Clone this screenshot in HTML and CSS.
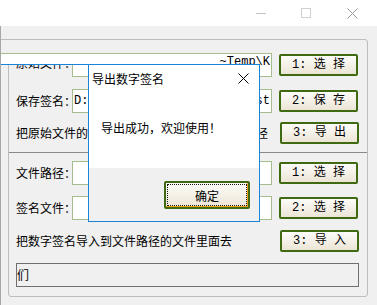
FILE: index.html
```html
<!DOCTYPE html>
<html lang="zh">
<head>
<meta charset="utf-8">
<title>数字签名</title>
<link rel="stylesheet" href="styles.css">
</head>
<body>
<div class="window">
  <div class="titlebar">
    <span class="ctl ctl-min"></span>
    <span class="ctl ctl-max"></span>
    <span class="ctl ctl-close">
      <svg width="11" height="11" viewBox="0 0 11 11"><path d="M0.5 0.5 L10.5 10.5 M10.5 0.5 L0.5 10.5" stroke="#9a9a9a" stroke-width="1" fill="none"/></svg>
    </span>
  </div>
  <div class="client">
    <div class="group">
      <div class="row row1">
        <span class="label">原始文件：</span>
        <div class="input right"><span>~Temp\K</span></div>
        <button class="btn">1: 选 择</button>
      </div>
      <div class="row row2">
        <span class="label">保存签名：</span>
        <div class="input split"><span>D:\</span><span>sign.dst</span></div>
        <button class="btn">2: 保 存</button>
      </div>
      <div class="row row3">
        <span class="label">把原始文件的数字签名导出到保存签名文件路径</span>
        <button class="btn">3: 导 出</button>
      </div>
      <div class="sep"></div>
      <div class="row row4">
        <span class="label">文件路径：</span>
        <div class="input"></div>
        <button class="btn">1: 选 择</button>
      </div>
      <div class="row row5">
        <span class="label">签名文件：</span>
        <div class="input"></div>
        <button class="btn">2: 选 择</button>
      </div>
      <div class="row row6">
        <span class="label">把数字签名导入到文件路径的文件里面去</span>
        <button class="btn">3: 导 入</button>
      </div>
      <div class="status">们</div>
    </div>
    <div class="strip"></div>
    <div class="corner-cover"></div>
  </div>

  <div class="dialog">
    <div class="dlg-title">
      <span>导出数字签名</span>
      <svg class="dlg-x" width="11" height="11" viewBox="0 0 11 11"><path d="M0.5 0.5 L10.5 10.5 M10.5 0.5 L0.5 10.5" stroke="#000" stroke-width="1" fill="none"/></svg>
    </div>
    <div class="dlg-body">导出成功，欢迎使用！</div>
    <div class="dlg-foot">
      <button class="ok">确定</button>
    </div>
  </div>
</div>
</body>
</html>
```

FILE: styles.css
```css
* { box-sizing: border-box; }
html, body {
  margin: 0;
  padding: 0;
  width: 377px;
  height: 305px;
  overflow: hidden;
  background: #f0f0f0;
  font-family: "Noto Sans CJK SC", "Microsoft YaHei", sans-serif;
  font-size: 12px;
  color: #000;
}
.window {
  position: relative;
  width: 377px;
  height: 305px;
}
.titlebar {
  height: 26px;
  background: #fff;
  display: flex;
  justify-content: flex-end;
  align-items: center;
  padding-right: 19px;
}
.ctl {
  display: block;
  position: relative;
}
.ctl-min {
  width: 10px;
  height: 1px;
  background: #c4c4c4;
  margin-right: 35px;
}
.ctl-max {
  width: 10px;
  height: 10px;
  border: 1px solid #d0d0d0;
  margin-right: 36px;
}
.ctl-close {
  width: 11px;
  height: 11px;
}
.ctl-close svg { display: block; }

.client {
  position: relative;
  height: 279px;
  border-left: 1px solid #a8a8a8;
  padding-top: 13px;
  padding-left: 7px;
}
.group {
  width: 360px;
  height: 258px;
  border: 1px solid #bdbdbd;
  border-radius: 0 3px 3px 3px;
  padding: 13px 8px 0 7px;
  display: flex;
  flex-direction: column;
}
.row {
  height: 24px;
  display: flex;
  align-items: center;
}
.row2 { margin-top: 12px; }
.row3 { margin-top: 8px; justify-content: space-between; }
.row4 { margin-top: 8px; }
.row5 { margin-top: 11px; }
.row6 { margin-top: 9px; justify-content: space-between; }
.sep {
  margin: 7px -8px 0 -7px;
  height: 1px;
  background: #8a8a8a;
}
.label {
  white-space: nowrap;
  width: 56px;
  line-height: 14px;
}
.row1 .label { margin-top: -4px; }
.row3 .label, .row6 .label { width: auto; }
.input {
  width: 200px;
  height: 24px;
  background: #fff;
  border: 1px solid #a6bd8e;
  font-family: "Liberation Mono", monospace;
  font-size: 12px;
  display: flex;
  align-items: center;
  overflow: hidden;
  white-space: nowrap;
  padding: 0 1px;
}
.input.right { justify-content: flex-end; }
.input.right span { margin-top: -6px; }
.input.split { justify-content: space-between; }
.btn {
  margin-left: 7px;
  width: 79px;
  height: 22px;
  border: 2px solid #3f6a12;
  border-radius: 2px;
  background: linear-gradient(#fdfcf9, #ece5d6);
  font-family: "Liberation Mono", "Noto Sans CJK SC", monospace;
  font-size: 12px;
  color: #000;
  padding: 0;
  white-space: pre;
  line-height: 16px;
}
.row3 .btn, .row6 .btn { margin-left: 0; }
.status {
  margin-top: 10px;
  height: 24px;
  border: 1px solid #6e6e6e;
  line-height: 22px;
  padding-left: 0;
  font-size: 12px;
  overflow: hidden;
}

.strip {
  position: absolute;
  left: 0;
  top: 27px;
  width: 88px;
  height: 12px;
  background: #fff;
  border-top: 1px solid #a6bd8e;
  border-bottom: 1px solid #1883d7;
}
.corner-cover {
  position: absolute;
  left: 0;
  top: 13px;
  width: 10px;
  height: 14px;
  background: #f0f0f0;
  border-top: 1px solid #bdbdbd;
}

.dialog {
  position: absolute;
  left: 88px;
  top: 64px;
  width: 172px;
  height: 158px;
  border: 1px solid #1883d7;
  background: #fff;
  display: flex;
  flex-direction: column;
}
.dlg-title {
  height: 27px;
  display: flex;
  align-items: center;
  justify-content: space-between;
  padding: 0 10px 0 3px;
  line-height: 14px;
}
.dlg-x { display: block; }
.dlg-body {
  flex: 1;
  padding: 29px 0 0 12px;
  line-height: 14px;
}
.dlg-foot {
  height: 53px;
  background: #f0f0f0;
  display: flex;
  justify-content: flex-end;
  align-items: flex-start;
  padding: 13px 9px 0 0;
}
.ok {
  position: relative;
  width: 86px;
  height: 28px;
  border: 2px solid #3f6a12;
  border-radius: 2px;
  background: linear-gradient(#fdfcf9, #ece5d6);
  box-shadow: inset -1px -1px 0 #f2a11e;
  outline: 1px dotted #1a1a1a;
  outline-offset: -4px;
  font-family: "Noto Sans CJK SC", sans-serif;
  font-size: 12px;
  color: #000;
  padding: 0;
}
```
